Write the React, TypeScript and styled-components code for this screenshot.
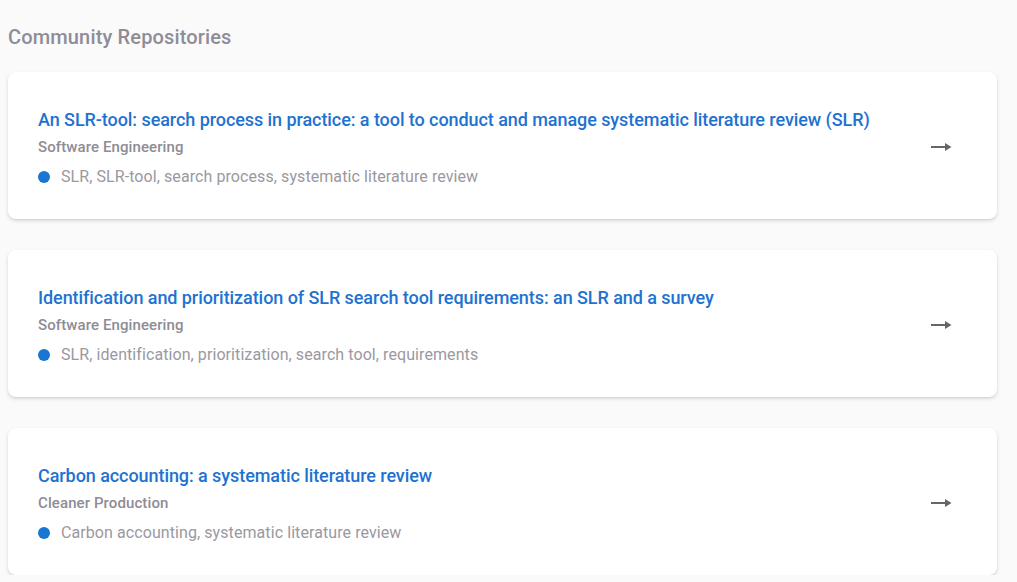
import React from 'react';
import styled, { createGlobalStyle } from 'styled-components';

const GlobalStyle = createGlobalStyle`
  body {
    margin: 0;
    padding: 0;
    background: #fafafa;
    font-family: Roboto, 'Liberation Sans', sans-serif;
  }
`;

const Page = styled.div`
  padding: 0 20px 0 8px;
`;

const Heading = styled.h2`
  margin: 23px 0 21px;
  font-size: 20px;
  line-height: 28px;
  font-weight: 500;
  letter-spacing: 0.15px;
  color: #8e8c98;
`;

const List = styled.div`
  display: flex;
  flex-direction: column;
  gap: 31px;
`;

const Card = styled.div`
  display: flex;
  align-items: center;
  justify-content: space-between;
  background: #fff;
  border-radius: 8px;
  box-shadow: 0 2px 4px rgba(0, 0, 0, 0.12), 0 1px 2px rgba(0, 0, 0, 0.06);
  padding: 36px 45px 31px 30px;
  cursor: pointer;
`;

const Body = styled.div`
  display: flex;
  flex-direction: column;
`;

const Title = styled.div`
  font-size: 18px;
  line-height: 24px;
  font-weight: 500;
  letter-spacing: -0.07px;
  color: #1e72d0;
`;

const Journal = styled.div`
  margin-top: 4px;
  font-size: 15px;
  line-height: 22px;
  font-weight: 500;
  letter-spacing: 0.1px;
  color: #8e8c94;
`;

const Keywords = styled.div`
  margin-top: 8px;
  display: flex;
  align-items: center;
  gap: 11px;
  font-size: 16px;
  line-height: 22px;
  letter-spacing: 0.08px;
  color: #9a98a0;
`;

const Dot = styled.span`
  width: 12px;
  height: 12px;
  border-radius: 50%;
  background: #1976d2;
  flex-shrink: 0;
`;

const Arrow = styled.svg`
  width: 21px;
  height: 10px;
  flex-shrink: 0;
  margin-bottom: 2px;
`;

const repos = [
  {
    title: 'An SLR-tool: search process in practice: a tool to conduct and manage systematic literature review (SLR)',
    journal: 'Software Engineering',
    keywords: 'SLR, SLR-tool, search process, systematic literature review',
  },
  {
    title: 'Identification and prioritization of SLR search tool requirements: an SLR and a survey',
    journal: 'Software Engineering',
    keywords: 'SLR, identification, prioritization, search tool, requirements',
  },
  {
    title: 'Carbon accounting: a systematic literature review',
    journal: 'Cleaner Production',
    keywords: 'Carbon accounting, systematic literature review',
  },
];

const App: React.FC = () => (
  <>
    <GlobalStyle />
    <Page>
      <Heading>Community Repositories</Heading>
      <List>
        {repos.map((r) => (
          <Card key={r.title}>
            <Body>
              <Title>{r.title}</Title>
              <Journal>{r.journal}</Journal>
              <Keywords>
                <Dot />
                <span>{r.keywords}</span>
              </Keywords>
            </Body>
            <Arrow viewBox="0 0 21 10">
              <path d="M0 5h15" stroke="#666" strokeWidth="2" />
              <path d="M14 1L20.5 5L14 9z" fill="#666" />
            </Arrow>
          </Card>
        ))}
      </List>
    </Page>
  </>
);

export default App;
